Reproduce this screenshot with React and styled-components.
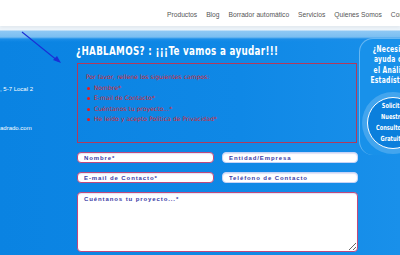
import React from 'react'
import styled, { createGlobalStyle } from 'styled-components'

const Global = createGlobalStyle`
  html, body {
    margin: 0;
    padding: 0;
    width: 400px;
    height: 255px;
    overflow: hidden;
    background: #0c86e4;
  }
  * { box-sizing: border-box; }
`

const Page = styled.div`
  width: 400px;
  height: 255px;
  overflow: hidden;
  display: flex;
  flex-direction: column;
  font-family: 'Liberation Sans', Arial, sans-serif;
`

const Header = styled.header`
  height: 26px;
  flex: none;
  background: #fff;
  display: flex;
  align-items: center;
  padding: 2px 0 0 167px;
  box-shadow: 0 2px 3px rgba(0, 0, 0, 0.05);
  position: relative;
  z-index: 1;
`

const Nav = styled.nav`
  display: flex;
  gap: 9px;
  white-space: nowrap;
`

const NavLink = styled.a`
  font-size: 6.7px;
  color: #555;
  text-decoration: none;
`

const Main = styled.main`
  flex: 1;
  position: relative;
  display: grid;
  grid-template-columns: 77px 281px 1fr;
  background:
    linear-gradient(to bottom, #eef5fb 0, #eef5fb 4px, #8ec8f4 5px, #7abef1 11px, #1a8de8 13px, transparent 16px),
    linear-gradient(to right, #0a83e2, #0f88e6 60%, #1990ea);
`

const Arrow = () =>
  <ArrowSvg viewBox='0 0 70 45' width='70' height='45'>
    <line x1='22' y1='6' x2='58' y2='35' stroke='#1a2fd6' strokeWidth='1.1' />
    <polygon points='61,37 53,34 57,30' fill='#1a2fd6' />
  </ArrowSvg>

const ArrowSvg = styled.svg`
  position: absolute;
  left: 0;
  top: 0;
`

const Side = styled.div`
  padding-top: 59px;
  color: #fff;
  font-size: 6px;
  line-height: 8px;
  white-space: nowrap;
`

const SideLine = styled.div`
  margin-bottom: ${props => props.gap || 0}px;
`

const Center = styled.div`
  padding-top: 16px;
`

const Title = styled.h2`
  margin: 0 0 3px -1px;
  font-family: 'DejaVu Sans Condensed', 'DejaVu Sans', sans-serif;
  font-weight: bold;
  font-size: 12px;
  line-height: 18px;
  letter-spacing: 0.4px;
  color: #fff;
  white-space: nowrap;
  transform: scaleX(0.81);
  transform-origin: left center;
`

const ErrorBox = styled.div`
  width: 280px;
  height: 80px;
  border: 1px solid #b23a5c;
  padding: 8px 0 0 8px;
  color: #d8282e;
  font-family: 'DejaVu Sans', Verdana, sans-serif;
  font-size: 6.1px;
`

const ErrorText = styled.p`
  margin: 0 0 1px;
  line-height: 10px;
`

const ErrorList = styled.ul`
  margin: 0;
  padding: 0;
  list-style: none;
`

const ErrorItem = styled.li`
  display: flex;
  align-items: center;
  gap: 4px;
  line-height: 10.4px;
  &::before {
    content: '';
    width: 3px;
    height: 3px;
    border-radius: 50%;
    background: #f01818;
    margin-left: 1px;
  }
`

const Form = styled.form`
  margin-top: 9px;
  display: grid;
  grid-template-columns: 137px 136px;
  column-gap: 8px;
  row-gap: 9px;
`

const fieldStyles = `
  display: block;
  width: 100%;
  margin: 0;
  background: #fff;
  border-radius: 4px;
  font-family: 'Liberation Sans', Arial, sans-serif;
  font-weight: bold;
  font-size: 6px;
  letter-spacing: 0.9px;
  color: #3b3ba6;
  outline: none;
  &::placeholder { color: #3b3ba6; opacity: 1; }
`

const Input = styled.input`
  ${fieldStyles}
  height: 11px;
  padding: 0 0 0 6px;
  border: 1px solid ${props => props.invalid ? '#c0497c' : '#c7d3f6'};
  box-shadow: inset 0 1px 1px rgba(120, 140, 220, 0.25);
`

const TextArea = styled.textarea`
  ${fieldStyles}
  grid-column: 1 / span 2;
  height: 60px;
  padding: 3px 6px;
  border: 1px solid #c0497c;
  resize: vertical;
  box-shadow: inset 0 1px 1px rgba(120, 140, 220, 0.25);
`

const Aside = styled.aside`
  padding: 12px 0 0 1px;
`

const Panel = styled.div`
  width: 66px;
  padding: 5px 0 6px;
  border-radius: 14px 0 0 14px;
  background: #1891ea;
  border-left: 1px solid rgba(200, 230, 255, 0.45);
  border-top: 1px solid rgba(200, 230, 255, 0.45);
  display: flex;
  flex-direction: column;
  align-items: center;
  color: #fff;
  font-family: 'DejaVu Sans Condensed', 'DejaVu Sans', sans-serif;
  font-weight: bold;
  white-space: nowrap;
`

const PanelTitle = styled.div`
  font-size: 9.5px;
  line-height: 10.3px;
  text-align: center;
  letter-spacing: 0.4px;
  transform: scaleX(0.7);
`

const Circle = styled.div`
  margin-top: 12px;
  width: 52px;
  height: 52px;
  flex: none;
  border-radius: 50%;
  border: 1.5px solid #fff;
  background: #0b7fdc;
  box-shadow: 0 0 0 5px rgba(120, 190, 245, 0.45);
  display: flex;
  align-items: center;
  justify-content: center;
`

const CircleText = styled.div`
  display: flex;
  flex-direction: column;
  align-items: center;
  font-size: 7px;
  line-height: 11px;
  transform: scaleX(0.8);
`

export default function App() {
  return (
    <Page>
      <Global />
      <Header>
        <Nav>
          <NavLink>Productos</NavLink>
          <NavLink>Blog</NavLink>
          <NavLink>Borrador automático</NavLink>
          <NavLink>Servicios</NavLink>
          <NavLink>Quienes Somos</NavLink>
          <NavLink>Contacto</NavLink>
        </Nav>
      </Header>
      <Main>
        <Arrow />
        <Side>
          <SideLine gap={31}>, 5-7 Local 2</SideLine>
          <SideLine>adrado.com</SideLine>
        </Side>
        <Center>
          <Title>¿HABLAMOS? : ¡¡¡Te vamos a ayudar!!!</Title>
          <ErrorBox>
            <ErrorText>Por favor, rellene los siguientes campos:</ErrorText>
            <ErrorList>
              <ErrorItem>Nombre*</ErrorItem>
              <ErrorItem>E-mail de Contacto*</ErrorItem>
              <ErrorItem>Cuéntanos tu proyecto...*</ErrorItem>
              <ErrorItem>He leído y acepto Política de Privacidad*</ErrorItem>
            </ErrorList>
          </ErrorBox>
          <Form>
            <Input invalid placeholder='Nombre*' />
            <Input placeholder='Entidad/Empresa' />
            <Input invalid placeholder='E-mail de Contacto*' />
            <Input placeholder='Teléfono de Contacto' />
            <TextArea placeholder='Cuéntanos tu proyecto...*' />
          </Form>
        </Center>
        <Aside>
          <Panel>
            <PanelTitle>
              ¿Necesitas<br />ayuda con<br />el Análisis<br />Estadístico?
            </PanelTitle>
            <Circle>
              <CircleText>
                <span>Solicita</span>
                <span>Nuestra</span>
                <span>Consultoría</span>
                <span>Gratuita</span>
              </CircleText>
            </Circle>
          </Panel>
        </Aside>
      </Main>
    </Page>
  )
}
